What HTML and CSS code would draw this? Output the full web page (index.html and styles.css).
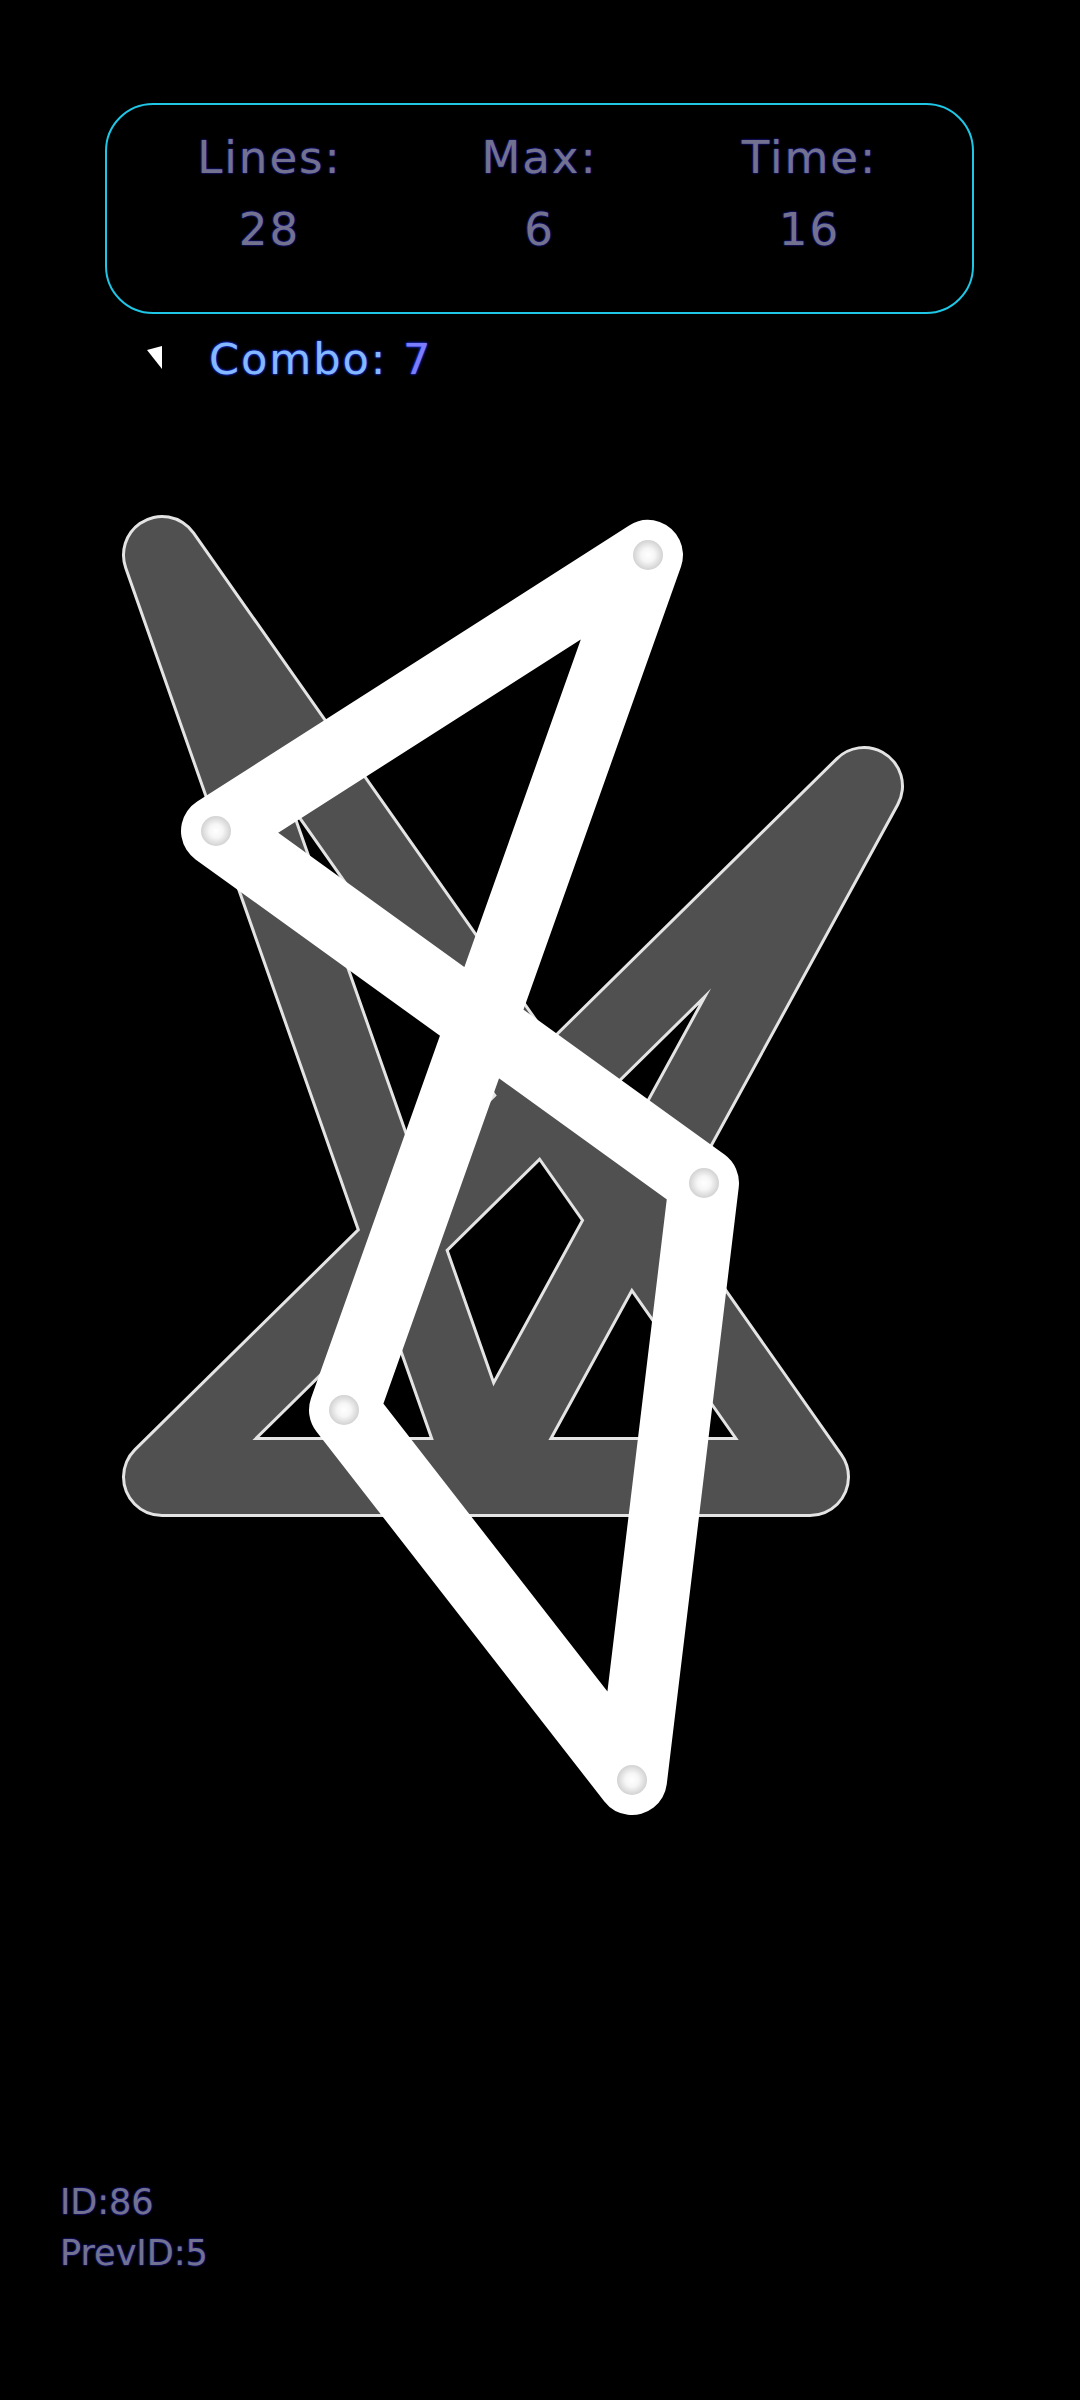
FILE: index.html
```html
<!DOCTYPE html>
<html lang="en">
<head>
<meta charset="utf-8">
<title>Lines</title>
<link rel="stylesheet" href="styles.css">
</head>
<body>
<svg class="board" width="1080" height="2400" viewBox="0 0 1080 2400" xmlns="http://www.w3.org/2000/svg">
  <defs>
    <radialGradient id="dot" cx="50%" cy="50%" r="50%">
      <stop offset="0" stop-color="#ffffff"/>
      <stop offset="0.45" stop-color="#f6f6f6"/>
      <stop offset="1" stop-color="#d2d2d2"/>
    </radialGradient>
  </defs>
  <path class="shadow-outline" d="M810 1477 L162 555 L486 1477 L864 786 L162 1477 Z"/>
  <path class="shadow-fill" d="M810 1477 L162 555 L486 1477 L864 786 L162 1477 Z"/>
  <path class="trail" d="M648 555 L216 831 L704 1183 L632 1780 L344 1410 Z"/>
  <circle class="node" cx="648" cy="555" r="15"/>
  <circle class="node" cx="216" cy="831" r="15"/>
  <circle class="node" cx="704" cy="1183" r="15"/>
  <circle class="node" cx="632" cy="1780" r="15"/>
  <circle class="node" cx="344" cy="1410" r="15"/>
</svg>
<div class="page">
  <div class="stats">
    <div class="stat">
      <div class="stat-label">Lines:</div>
      <div class="stat-value">28</div>
    </div>
    <div class="stat">
      <div class="stat-label">Max:</div>
      <div class="stat-value">6</div>
    </div>
    <div class="stat">
      <div class="stat-label">Time:</div>
      <div class="stat-value">16</div>
    </div>
  </div>
  <div class="combo">
    <svg class="combo-mark" width="16" height="24" viewBox="0 0 16 24" xmlns="http://www.w3.org/2000/svg">
      <polygon points="0,4 15,0 15,23" fill="#ffffff"/>
    </svg>
    <div class="combo-text">Combo: <span class="combo-num">7</span></div>
  </div>
  <div class="footer">
    <div class="footer-line">ID:86</div>
    <div class="footer-line">PrevID:5</div>
  </div>
</div>
</body>
</html>
```
FILE: styles.css
```css
html, body {
  margin: 0;
  padding: 0;
  background: #000000;
}

body {
  width: 1080px;
  height: 2400px;
  position: relative;
  overflow: hidden;
  font-family: "DejaVu Sans", "Liberation Sans", sans-serif;
}

.board {
  position: absolute;
  left: 0;
  top: 0;
  z-index: 0;
}

.shadow-outline {
  fill: none;
  stroke: #e4e4e4;
  stroke-width: 80;
  stroke-linejoin: round;
  stroke-linecap: round;
}

.shadow-fill {
  fill: none;
  stroke: #505050;
  stroke-width: 74;
  stroke-linejoin: round;
  stroke-linecap: round;
}

.trail {
  fill: none;
  stroke: #ffffff;
  stroke-width: 70;
  stroke-linejoin: round;
  stroke-linecap: round;
}

.node {
  fill: url(#dot);
}

.page {
  position: relative;
  z-index: 1;
  height: 2400px;
  box-sizing: border-box;
  display: flex;
  flex-direction: column;
  padding: 103px 0 121px 0;
}

.stats {
  margin: 0 106px 0 105px;
  height: 211px;
  box-sizing: border-box;
  border: 2.5px solid #1fc6e6;
  border-radius: 48px;
  display: grid;
  grid-template-columns: repeat(3, 270px);
  justify-content: center;
  align-content: start;
  padding-top: 26px;
}

.stat {
  display: flex;
  flex-direction: column;
  align-items: center;
  gap: 18px;
}

.stat-label,
.stat-value,
.footer-line {
  color: #72728e;
  text-shadow: 0 0 2px #1c1ca8, 0 0 2px #1c1ca8;
}

.stat-label,
.stat-value {
  font-size: 45px;
  line-height: 54px;
  letter-spacing: 2px;
}

.combo {
  display: flex;
  align-items: flex-start;
  margin-top: 19px;
  padding-left: 147px;
}

.combo-mark {
  margin-top: 13px;
  flex: none;
}

.combo-text {
  margin-left: 46px;
  font-size: 43px;
  line-height: 52px;
  letter-spacing: 2px;
  color: #84b8ff;
  text-shadow: 0 0 2px #1a34f0, 0 0 3px #1a34f0;
}

.combo-num {
  color: #7c7cff;
}

.footer {
  margin-top: auto;
  padding-left: 60px;
}

.footer-line {
  font-size: 35px;
  line-height: 51px;
}
```
